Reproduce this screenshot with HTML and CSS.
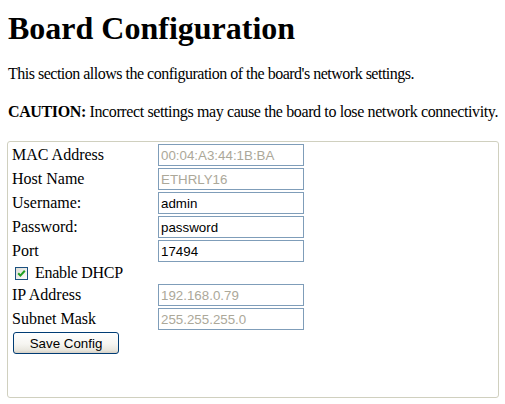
FILE: index.html
```html
<!DOCTYPE html>
<html>
<head>
<meta charset="utf-8">
<title>Board Configuration</title>
<link rel="stylesheet" href="styles.css">
</head>
<body>
<h1 class="title">Board Configuration</h1>
<p class="intro">This section allows the configuration of the board's network settings.</p>
<p class="caution"><b>CAUTION:</b> Incorrect settings may cause the board to lose network connectivity.</p>
<form class="box">
  <div class="grid">
    <span class="lbl">MAC Address</span>
    <input class="field ro" type="text" value="00:04:A3:44:1B:BA" readonly>
    <span class="lbl">Host Name</span>
    <input class="field ro" type="text" value="ETHRLY16" readonly>
    <span class="lbl">Username:</span>
    <input class="field" type="text" value="admin">
    <span class="lbl">Password:</span>
    <input class="field" type="text" value="password">
    <span class="lbl">Port</span>
    <input class="field" type="text" value="17494">
    <label class="dhcp">
      <svg class="check" width="13" height="13" viewBox="0 0 13 13">
        <defs>
          <linearGradient id="cbg" x1="0" y1="0" x2="1" y2="1">
            <stop offset="0" stop-color="#dcdcd4"/>
            <stop offset="1" stop-color="#ffffff"/>
          </linearGradient>
        </defs>
        <rect x="0.5" y="0.5" width="12" height="12" fill="url(#cbg)" stroke="#1c5180"/>
        <path d="M3.2 6.2 L5.4 8.6 L9.8 3.8" fill="none" stroke="#21a121" stroke-width="2"/>
      </svg>
      <span>Enable DHCP</span>
    </label>
    <span class="lbl">IP Address</span>
    <input class="field ro" type="text" value="192.168.0.79" readonly>
    <span class="lbl">Subnet Mask</span>
    <input class="field ro" type="text" value="255.255.255.0" readonly>
    <button class="save" type="button">Save Config</button>
  </div>
</form>
</body>
</html>
```
FILE: styles.css
```css
html, body {
  background: #ffffff;
}
body {
  margin: 0;
  padding: 8px;
  font-family: "Liberation Serif", "Times New Roman", serif;
  font-size: 16px;
  color: #000000;
}
.title {
  margin: 2px 0 0;
  font-size: 32px;
  line-height: 36px;
  font-weight: bold;
}
.intro {
  margin: 19px 0 0;
  line-height: 18px;
  letter-spacing: -0.5px;
  white-space: nowrap;
}
.caution {
  margin: 20px 0 0;
  line-height: 18px;
  letter-spacing: -0.38px;
  white-space: nowrap;
}
.box {
  margin: 20px -2px 0 -1px;
  box-sizing: border-box;
  height: 257px;
  border: 1px solid #d0d0bf;
  border-radius: 3px;
  padding: 2px 4px;
}
.grid {
  display: grid;
  grid-template-columns: 146px 146px;
  grid-template-rows: repeat(5, 22px) 18px repeat(3, 22px);
  row-gap: 2px;
  align-items: center;
}
.lbl {
  line-height: 18px;
  white-space: nowrap;
}
.field {
  box-sizing: border-box;
  width: 146px;
  height: 22px;
  margin: 0;
  border: 1px solid #7f9db9;
  padding: 0 2px;
  font-family: "Liberation Sans", Arial, sans-serif;
  font-size: 13.33px;
  color: #000000;
  background: #ffffff;
  outline: none;
}
.field.ro {
  color: #aca899;
}
.dhcp {
  grid-column: 1 / 3;
  display: flex;
  align-items: center;
  gap: 7px;
  padding-left: 3px;
  line-height: 18px;
  letter-spacing: -0.3px;
}
.check {
  display: block;
  flex: none;
}
.save {
  grid-column: 1 / 2;
  justify-self: start;
  margin: 0 0 0 1px;
  box-sizing: border-box;
  width: 106px;
  height: 22px;
  border: 1px solid #003c74;
  border-radius: 3px;
  padding: 0;
  background: linear-gradient(#ffffff 0%, #f6f5f1 55%, #e9e7df 85%, #d6d0c5 100%);
  font-family: "Liberation Sans", Arial, sans-serif;
  font-size: 13.33px;
  color: #000000;
}
```
